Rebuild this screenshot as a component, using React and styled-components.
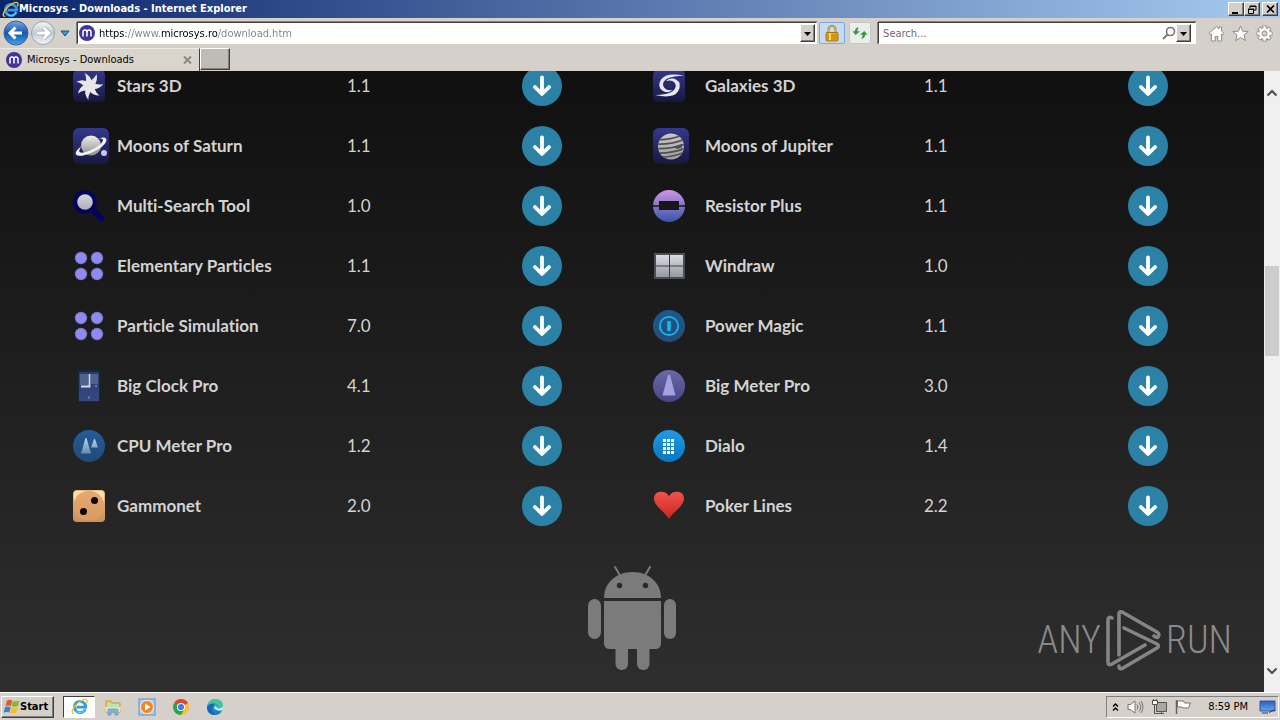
import React from "react";
import styled, { createGlobalStyle, css } from "styled-components";

const GlobalStyle = createGlobalStyle`
  * { box-sizing: border-box; }
  html, body { margin: 0; height: 100%; }
  #root { height: 100%; }
  button, input { font: inherit; padding: 0; margin: 0; border: 0; border-radius: 0; background: none; outline: none; }
  svg { display: block; flex: none; }
`;

const raised = css`
  background: #d4d0c8;
  border: 1px solid;
  border-color: #fff #404040 #404040 #fff;
  box-shadow: inset -1px -1px 0 #808080;
`;

const Screen = styled.div`
  height: 100vh;
  display: flex;
  flex-direction: column;
  overflow: hidden;
  background: #d5d0c9;
  color: #000;
  font: 11px/14px "DejaVu Sans Condensed", "DejaVu Sans", sans-serif;
`;

const TitleBar = styled.header`
  flex: none;
  height: 18px;
  padding: 0 2px;
  display: flex;
  align-items: center;
  background: linear-gradient(90deg, #0a246a, #a6caf0);
  color: #fff;
`;

const WindowTitle = styled.h1`
  flex: 1;
  margin: 0;
  font: bold 11px/18px "DejaVu Sans Condensed", "DejaVu Sans", sans-serif;
`;

const WindowButton = styled.button`
  ${raised}
  width: 16px;
  height: 14px;
  margin-left: ${(p) => (p.$spaced ? 2 : 0)}px;
  display: flex;
  align-items: center;
  justify-content: center;
`;

const Toolbar = styled.div`
  flex: none;
  height: 30px;
  padding: 0 4px 0 2px;
  display: flex;
  align-items: center;
`;

const PlainButton = styled.button`
  display: flex;
  align-items: center;
  justify-content: center;
  width: ${(p) => p.$width || 24}px;
  height: 28px;
`;

const Field = styled.div`
  flex: ${(p) => p.$grow} 1 0;
  min-width: 0;
  height: 22px;
  padding: 1px;
  display: flex;
  align-items: center;
  background: #fff;
  border: 1px solid;
  border-color: #404040 #fff #fff #404040;
  box-shadow: 0 -1px 0 #808080, -1px 0 0 #808080;
`;

const AddressInput = styled.input`
  flex: 1;
  min-width: 0;
  height: 18px;
  margin-left: 4px;
  color: transparent;
  background: linear-gradient(90deg, #000 27px, #808080 27px 62px, #000 62px 119px, #808080 119px);
  -webkit-background-clip: text;
  background-clip: text;
`;

const SearchInput = styled.input`
  flex: 1;
  min-width: 0;
  height: 18px;
  margin-left: 3px;
  &::placeholder { color: #6d6d6d; opacity: 1; }
`;

const DropButton = styled.button`
  ${raised}
  width: 15px;
  height: 18px;
  display: flex;
  align-items: center;
  justify-content: center;
`;

const StatusButton = styled.button`
  width: ${(p) => (p.$active ? 26 : 22)}px;
  height: 22px;
  margin-left: ${(p) => (p.$active ? 2 : 4)}px;
  display: flex;
  align-items: center;
  justify-content: center;
  background: ${(p) => (p.$active ? "#c5dcf7" : "#e9eeea")};
  border: 1px solid ${(p) => (p.$active ? "#7da7df" : "#c4c8cc")};
  border-radius: 2px;
`;

const FieldGap = styled.div`
  width: ${(p) => p.$width}px;
  flex: none;
`;

const TabRow = styled.nav`
  flex: none;
  height: 23px;
  display: flex;
`;

const Tab = styled.div`
  width: 200px;
  padding: 0 6px;
  display: flex;
  align-items: center;
  gap: 5px;
  background: #d9d4cc;
  border-top: 1px solid #eeebe5;
  border-right: 1px solid #404040;
`;

const TabLabel = styled.span`
  flex: 1;
`;

const CloseTab = styled.button`
  width: 12px;
  height: 12px;
  display: flex;
  align-items: center;
  justify-content: center;
`;

const NewTab = styled.button`
  ${raised}
  width: 30px;
  height: 22px;
  background: #bfbbb5;
`;

const Viewport = styled.div`
  flex: 1;
  min-height: 0;
  display: flex;
`;

const Page = styled.main`
  position: relative;
  flex: 1;
  min-width: 0;
  overflow: hidden;
  background: linear-gradient(#101010, #2e2e2e);
`;

const Lists = styled.div`
  display: flex;
  align-items: flex-start;
  gap: 91px;
  margin-top: -15px;
  padding: 0 96px 0 73px;
`;

const Programs = styled.table`
  flex: ${(p) => p.$grow} 1 0;
  min-width: 0;
  width: 0;
  table-layout: fixed;
  border-collapse: collapse;
  color: #d3d3d3;
  font: 17px/24px Lato, Carlito, sans-serif;
  font-variant-ligatures: none;
`;

const IconCol = styled.col`
  width: ${(p) => p.$width}px;
`;
const VersionCol = styled.col`
  width: ${(p) => p.$width}px;
`;
const LinkCol = styled.col`
  width: 40px;
`;

const Cell = styled.td`
  height: 60px;
  padding: 0;
  vertical-align: middle;
`;

const NameCell = styled.th`
  height: 60px;
  padding: 0;
  text-align: left;
  font-weight: 700;
  white-space: nowrap;
`;

const Download = styled.a`
  display: flex;
  align-items: center;
  justify-content: center;
  width: 40px;
  height: 40px;
  border-radius: 50%;
  background: #2c82a6;
`;

const Robot = styled.div`
  display: flex;
  justify-content: center;
  padding-top: 30px;
`;

const Watermark = styled.div`
  position: absolute;
  right: 32px;
  bottom: 20px;
  display: flex;
  align-items: center;
  gap: 5px;
  color: #8a8a8a;
  font: 300 38px/64px "Roboto Condensed", "Open Sans Condensed", "Noto Sans ExtraCondensed", "Liberation Sans Narrow", sans-serif;
`;

const Scrollbar = styled.div`
  flex: none;
  width: 16px;
  padding: 14px 0 13px;
  display: flex;
  flex-direction: column;
  background: #f0f0f0;
`;

const ScrollButton = styled.button`
  height: 16px;
  display: flex;
  align-items: center;
  justify-content: center;
`;

const Track = styled.div`
  flex: 1;
  padding: 0 1px;
  display: flex;
  flex-direction: column;
`;

const Before = styled.div`
  flex: 165;
`;
const Thumb = styled.div`
  flex: 90;
  background: #cdcdcd;
`;
const After = styled.div`
  flex: 307;
`;

const Taskbar = styled.footer`
  flex: none;
  height: 28px;
  padding: 0 1px;
  display: flex;
  align-items: center;
  border-top: 1px solid #fff;
  background: #d5d0c9;
`;

const StartButton = styled.button`
  ${raised}
  width: 53px;
  height: 22px;
  padding: 0 1px;
  display: flex;
  align-items: center;
  font: bold 11px/18px "DejaVu Sans Condensed", "DejaVu Sans", sans-serif;
`;

const Launchers = styled.div`
  flex: 1;
  display: flex;
  align-items: center;
  gap: 2px;
  margin-left: 9px;
`;

const Launcher = styled.button`
  width: 32px;
  height: 22px;
  display: flex;
  align-items: center;
  justify-content: center;
  ${(p) =>
    p.$active &&
    css`
      background: #fff;
      border: 1px solid;
      border-color: #404040 #fff #fff #404040;
    `}
`;

const Tray = styled.div`
  height: 22px;
  padding: 0 2px 0 4px;
  display: flex;
  align-items: center;
  gap: 7px;
  border: 1px solid;
  border-color: #808080 #fff #fff #808080;
`;

const Clock = styled.time`
  margin: 0 4px 0 9px;
`;

/* ---------- window icons ---------- */

const IeIcon = ({ size = 17 }) => (
  <svg width={size} height={size} viewBox="0 0 18 18">
    <path d="M15.2 11.7A6 6 0 1 1 15.6 9.600H5.800" fill="none" stroke="#2f9be0" strokeWidth="2.900" />
    <path d="M14.800 11.700A5.600 5.600 0 0 1 5 13.300" fill="none" stroke="#7fd3f7" strokeWidth="1" />
    <path d="M3.400 16.300C-.6 16.700 1.500 11 6.200 6.400 11 1.800 17.200-.4 16.900 3.500c-.1 1-.6 2-.6 2" fill="none" stroke="#f3c02e" strokeWidth="1.500" />
  </svg>
);

const SiteIcon = () => (
  <svg width="16" height="16" viewBox="0 0 16 16">
    <circle cx="8" cy="8" r="8" fill="#43349c" />
    <path d="M4 11.5V7.2Q4 5 6 5t2 2.200v4.300M8 7.200Q8 5 10 5t2 2.200v4.300" fill="none" stroke="#fff" strokeWidth="1.500" />
  </svg>
);

const Back = () => (
  <svg width="26" height="26" viewBox="0 0 26 26">
    <defs>
      <linearGradient id="back" x2="0" y2="1">
        <stop offset="0" stopColor="#7aa7e0" />
        <stop offset=".5" stopColor="#1a55ae" />
        <stop offset="1" stopColor="#3fa4ee" />
      </linearGradient>
    </defs>
    <circle cx="13" cy="13" r="12" fill="url(#back)" stroke="#3d5f92" />
    <path d="M19 13H8M12.500 7.500 7 13l5.500 5.500" fill="none" stroke="#fff" strokeWidth="3" />
  </svg>
);

const Forward = () => (
  <svg width="26" height="26" viewBox="0 0 26 26">
    <defs>
      <linearGradient id="forward" x2="0" y2="1">
        <stop offset="0" stopColor="#f5f6f8" />
        <stop offset=".5" stopColor="#c3cad3" />
        <stop offset="1" stopColor="#f3f6fa" />
      </linearGradient>
    </defs>
    <circle cx="13" cy="13" r="11.500" fill="url(#forward)" stroke="#98a2ae" />
    <path d="M7 13h11M13.500 7.500 19 13l-5.500 5.500" fill="none" stroke="#a0a8b2" strokeWidth="4.400" />
    <path d="M7 13h11M13.500 7.500 19 13l-5.500 5.500" fill="none" stroke="#fff" strokeWidth="2.800" />
  </svg>
);

const Triangle = ({ blue }) => (
  <svg width="10" height="7" viewBox="0 0 10 7">
    {blue ? <path d="M1 1h8L5 6z" fill="#35a0d5" stroke="#1b4d83" /> : <path d="M1 2h7L4.500 6z" fill="#000" />}
  </svg>
);

const Lock = () => (
  <svg width="14" height="17" viewBox="0 0 14 17">
    <path d="M3.500 8V4.500a3.500 3.500 0 0 1 7 0V8" fill="none" stroke="#a87b1e" strokeWidth="2" />
    <path d="M3.500 8V4.500a3.500 3.500 0 0 1 7 0V8" fill="none" stroke="#e4c063" strokeWidth=".8" />
    <rect x="1" y="7.500" width="12" height="8.500" rx="1" fill="#e8a81c" stroke="#a7730f" />
    <path d="M2 10h10M2 12h10M2 14h10" stroke="#bd8210" />
    <path d="M5 8v7" stroke="#fad879" strokeWidth="2" />
  </svg>
);

const Refresh = () => (
  <svg width="16" height="14" viewBox="0 0 16 14">
    <path d="M6.500 1 5.200 5.200H8L3.700 9 .5 5.200h2.300Q3.200 2 6.500 1z" fill="#2e9a3b" />
    <path d="m9.500 13 1.300-4.200H8L12.300 5l3.200 3.800h-2.300Q12.800 12 9.500 13z" fill="#2e9a3b" />
  </svg>
);

const Magnifier = () => (
  <svg width="14" height="14" viewBox="0 0 14 14">
    <circle cx="8.500" cy="5.500" r="4" fill="none" stroke="#777" strokeWidth="1.600" />
    <path d="m5.500 8.500-4.500 4.500" stroke="#777" strokeWidth="2" />
  </svg>
);

const Home = () => (
  <svg width="17" height="17" viewBox="0 0 17 17">
    <path d="M1 8.300 8.500 1.500 11 3.800V2h2.500v4L16 8.300l-1.200 1.500-1.100-1V16h-3.900v-4.500H7.200V16H3.300V8.800l-1.100 1z" fill="#fff" stroke="#8c8a86" />
  </svg>
);
const Star = () => (
  <svg width="17" height="17" viewBox="0 0 17 17">
    <path d="m8.500 1 2.100 5.200 5.600.3-4.300 3.600 1.400 5.500-4.800-3.100-4.800 3.100 1.400-5.500L.8 6.500l5.600-.3z" fill="#fff" stroke="#8c8a86" />
  </svg>
);
const Gear = () => (
  <svg width="17" height="17" viewBox="0 0 17 17">
    <g stroke="#8c8a86" strokeWidth="4.200">
      <path d="M8.500.5v16M.5 8.500h16M2.800 2.800l11.400 11.400M14.200 2.800 2.800 14.200" />
    </g>
    <circle cx="8.500" cy="8.500" r="6.300" fill="#8c8a86" />
    <g stroke="#fff" strokeWidth="2.400">
      <path d="M8.500 1.200v14.600M1.200 8.500h14.600M3.300 3.300l10.400 10.400M13.700 3.300 3.300 13.700" />
    </g>
    <circle cx="8.500" cy="8.500" r="5.400" fill="#fff" />
    <circle cx="8.500" cy="8.500" r="2.500" fill="#d5d0c9" stroke="#8c8a86" />
  </svg>
);

/* ---------- program icons ---------- */

const Gradient = ({ id, from, to }) => (
  <defs>
    <linearGradient id={id} x2="0" y2="1">
      <stop offset="0" stopColor={from} />
      <stop offset="1" stopColor={to} />
    </linearGradient>
  </defs>
);

const Art = ({ size = 32, children }) => (
  <svg width={size} height={size} viewBox={`0 0 ${size} ${size}`}>
    {children}
  </svg>
);

const Stars = () => (
  <Art>
    <Gradient id="stars" from="#33388c" to="#15173f" />
    <rect width="32" height="32" rx="5" fill="url(#stars)" />
    <g fill="#e8e6e6" transform="translate(16.500 16)">
      <circle r="5" />
      {[0, 51.400, 102.900, 154.300, 205.700, 257.100, 308.600].map((a) => (
        <path key={a} transform={`rotate(${a})`} d="M-4.200-2.500Q-2.200-8-5-13 1.500-10 2.200-4z" />
      ))}
    </g>
  </Art>
);

const Galaxy = () => (
  <Art>
    <Gradient id="galaxy" from="#33388c" to="#15173f" />
    <rect width="32" height="32" rx="5" fill="url(#galaxy)" />
    <g fill="#e8e6ec">
      <path d="M31 5.500Q13 2 8 9.500 3.500 17 10 21q6 3 10-1-6 1-8.500-2Q8 13.500 13 9.500 19 6 31 5.500z" />
      <path d="M2 25Q20 29 25 21.500 29.500 13 23 9.500q-6-3-10 1.500 6-1.500 8.500 1.500 3 4-1.500 8.500Q14 25 2 25z" />
    </g>
    <path d="M28 7.500Q14 6.500 11 12M5 23.500Q18 24 21.500 18.500" fill="none" stroke="#2b2f70" strokeWidth=".8" />
    <circle cx="16.500" cy="15.300" r="2.800" fill="#292d6c" />
  </Art>
);

const Saturn = () => (
  <Art size={36}>
    <Gradient id="saturn" from="#34398e" to="#16183f" />
    <Gradient id="saturnBall" from="#f0eee8" to="#8f8e90" />
    <rect width="36" height="36" rx="6" fill="url(#saturn)" />
    <circle cx="18" cy="17.500" r="10" fill="url(#saturnBall)" />
    <path d="M8.500 18Q1 24 3 26.500 6 30 19 24.500 33 18 33.500 12 33 8 26 10.500 31.500 10 29.500 13.500 27 18 18 22 9 26 6.500 24 5.500 22.500 8.500 18z" fill="#f1f0f2" />
    <circle cx="31" cy="25" r="3" fill="#c3c6f3" />
  </Art>
);

const Jupiter = () => (
  <Art size={36}>
    <Gradient id="jupiter" from="#34398e" to="#16183f" />
    <Gradient id="jupiterBall" from="#c9c8c6" to="#a2a0a2" />
    <clipPath id="jupiterClip"><circle cx="18" cy="18.500" r="13" /></clipPath>
    <rect width="36" height="36" rx="6" fill="url(#jupiter)" />
    <circle cx="18" cy="18.500" r="13" fill="url(#jupiterBall)" />
    <g clipPath="url(#jupiterClip)" fill="none" stroke="#515054" strokeWidth="1.700">
      <path d="M5 11.500q9 1 24-4M3 16q13 1 28-4.500M3 20.500q14 1 30-4.500M3 25q14 1 30-5M6 29q12 1 26-5" />
      <path d="m22 19 6-2v2l-4 1z" fill="#515054" />
    </g>
  </Art>
);

const SearchTool = () => (
  <Art>
    <Gradient id="lens" from="#d9d9e6" to="#aaaab6" />
    <path d="m19 19 9.500 9.500" stroke="#03035c" strokeWidth="6" strokeLinecap="round" />
    <circle cx="12" cy="12" r="9.800" fill="url(#lens)" stroke="#03035c" strokeWidth="4" />
  </Art>
);

const Resistor = () => (
  <Art>
    <Gradient id="resistor" from="#d193e6" to="#3556a5" />
    <circle cx="16" cy="16" r="16" fill="url(#resistor)" />
    <path d="M0 15.200h6V11h20v4.200h6v1.600h-6V20H6v-3.200H0z" fill="#171717" />
  </Art>
);

const Particles = () => (
  <Art>
    <defs>
      <radialGradient id="particle">
        <stop offset="0" stopColor="#8c88fb" />
        <stop offset=".7" stopColor="#918cf2" />
        <stop offset="1" stopColor="#706ab8" />
      </radialGradient>
    </defs>
    {[8, 24].map((y) => [8, 24].map((x) => <circle key={`${x}-${y}`} cx={x} cy={y} r="6.200" fill="url(#particle)" />))}
  </Art>
);

const Windraw = () => (
  <Art>
    <Gradient id="pane" from="#dadce3" to="#9699a2" />
    <path d="M1 3h31v26H1z" fill="#4b4e57" />
    <path d="M3 5h27v22H3z" fill="url(#pane)" />
    <path d="M16.500 5v22M3 16h27" stroke="#383a42" />
  </Art>
);

const Power = () => (
  <Art>
    <Gradient id="power" from="#195b8d" to="#264b77" />
    <circle cx="16" cy="16" r="16" fill="url(#power)" />
    <circle cx="16" cy="16" r="9.200" fill="none" stroke="#12bdf0" strokeWidth="1.700" />
    <path d="M16 11v10" stroke="#12bdf0" strokeWidth="3.400" />
  </Art>
);

const BigClock = () => (
  <Art>
    <Gradient id="clock" from="#2b3a69" to="#354987" />
    <rect x="5" y="0" width="22" height="32" rx="2" fill="#16283d" />
    <rect x="6" y="2" width="20" height="29" fill="url(#clock)" />
    <path d="M7 4h8v11H7zM18 4h7v10h-7z" fill="#4d628f" />
    <path d="M8 16.500h8.500V4" fill="none" stroke="#d8dde5" strokeWidth="1.800" />
    <path d="M22 16h2M16 26.500v2" stroke="#8291c3" strokeWidth="1.500" />
  </Art>
);

const BigMeter = () => (
  <Art>
    <Gradient id="meter" from="#6b68a9" to="#484585" />
    <circle cx="16" cy="16" r="16" fill="url(#meter)" />
    <path d="M15 5h2L22.500 25.500h-13z" fill="#a5a0df" />
  </Art>
);

const CpuMeter = () => (
  <Art>
    <Gradient id="cpu" from="#235d98" to="#204a76" />
    <Gradient id="cpuCone" from="#bfd2e5" to="#638caf" />
    <circle cx="16" cy="16" r="16" fill="url(#cpu)" />
    <path d="M12.500 8h1L18 23.500H8zM21 9h1l3 8.500h-7z" fill="url(#cpuCone)" />
  </Art>
);

const Dialo = () => (
  <Art>
    <Gradient id="dialo" from="#209be7" to="#0876bd" />
    <circle cx="16" cy="16" r="16" fill="url(#dialo)" />
    {[9, 13, 17, 21].map((y) => [10, 14, 18].map((x) => <rect key={`${x}-${y}`} x={x} y={y} width="3" height="3" fill="#fff" />))}
  </Art>
);

const Die = () => (
  <Art>
    <Gradient id="die" from="#edba7e" to="#d08d5a" />
    <rect width="32" height="32" rx="4" fill="url(#die)" />
    <path d="M1 6V4q0-3 3-3h9Q4 3 1 11zM19 1h9q3 0 3 3v8Q28 4 19 1z" fill="#fbdfac" />
    <circle cx="16" cy="16" r="15" fill="#df9f69" opacity=".65" />
    <circle cx="21.500" cy="10.500" r="3.500" fill="#080605" />
    <circle cx="10.500" cy="21.500" r="3.500" fill="#080605" />
  </Art>
);

const Heart = () => (
  <Art>
    <Gradient id="heart" from="#ef5349" to="#cd2524" />
    <path d="M16 29Q14 25.500 6.500 18.500 1 13 1 8.500C1 4.500 4 1.800 8 1.800q5.500 0 8 4.400 2.500-4.400 8-4.400c4 0 7 2.700 7 6.700q0 4.500-5.500 10Q18 25.500 16 29z" fill="url(#heart)" />
  </Art>
);

const DownArrow = () => (
  <svg width="20" height="22" viewBox="0 0 20 22">
    <path d="M10 2.500v16M2.900 12l7.100 7 7.100-7" fill="none" stroke="#fff" strokeWidth="3.800" strokeLinecap="round" strokeLinejoin="round" />
  </svg>
);

const RobotArt = () => (
  <svg width="88" height="104" viewBox="0 0 88 104" fill="#7b7b7b">
    <path d="m27 1 6 10M62 1l-6 10" stroke="#7b7b7b" strokeWidth="2" strokeLinecap="round" />
    <path d="M16 32C16 17 28 6 44.500 6S73 17 73 32z" />
    <circle cx="31.500" cy="19.500" r="2.700" fill="#292929" />
    <circle cx="57.500" cy="19.500" r="2.700" fill="#292929" />
    <path d="M16 35h57v42q0 6-6 6H22q-6 0-6-6z" />
    <rect x="0" y="33" width="13" height="40" rx="6.500" />
    <rect x="76" y="33" width="12" height="40" rx="6" />
    <rect x="27.500" y="74" width="12.500" height="30" rx="6" />
    <rect x="49" y="74" width="12.500" height="30" rx="6" />
  </svg>
);

const PlayMark = () => (
  <svg width="55" height="63" viewBox="0 0 55 63" fill="none" stroke="#858585" strokeWidth="3.600" strokeLinejoin="round" strokeLinecap="round">
    <path d="M13 46V5q0-3 3-2l35 20q3 2 1 5-1 1-4-1" />
    <path d="M6 9Q2 7 2 11v42q0 4 4 2l33-19" />
    <path d="m18 19 33 16q3 2 0 4L17 59q-4 2-4-2" />
  </svg>
);

/* ---------- taskbar icons ---------- */

const WindowsFlag = () => (
  <svg width="17" height="16" viewBox="0 0 17 16">
    <path d="M4 1.500Q7 0 9.300 1.500L8 7Q5 5.800 2.300 7z" fill="#e65a2a" />
    <path d="M10 2Q13 3 16.300 1.500L15 7q-3 1.500-6.200.3z" fill="#7dba36" />
    <path d="M2 8.200q3-1.300 5.600 0L6.300 13.500Q4 12.300.7 13.500z" fill="#3b7fd0" />
    <path d="M8.500 8.500q3 1.200 6.200-.2l-1.300 5.200q-3 1.500-6.200.3z" fill="#f5bd24" />
  </svg>
);
const Folder = () => (
  <svg width="18" height="18" viewBox="0 0 18 18">
    <path d="M2 3h5l1 2h8v9H2z" fill="#eecf69" stroke="#c49d3a" />
    <path d="M3 6h12v3H3z" fill="#b9e3bb" />
    <path d="M1 9h16l-1 5H2z" fill="#f7e49c" />
    <path d="M4 17v-5q0-1 1-1h8q1 0 1 1v5h-3v-3H7v3z" fill="#7db8e6" stroke="#4c91c7" strokeWidth=".7" />
  </svg>
);
const Player = () => (
  <svg width="18" height="18" viewBox="0 0 18 18">
    <rect x="1" y="1" width="16" height="16" fill="#acd0ef" stroke="#5d91c7" />
    <circle cx="9" cy="9" r="6.500" fill="#f38620" stroke="#fff" strokeWidth=".8" />
    <path d="m7 5.500 5.500 3.500L7 12.500z" fill="#fff" />
  </svg>
);
const Chrome = () => (
  <svg width="18" height="18" viewBox="0 0 18 18">
    <circle cx="9" cy="9" r="8" fill="#f6c32a" />
    <path d="M9 9 2.100 5A8 8 0 0 1 16 5z" fill="#dc4437" />
    <path d="M9 9 2.100 5A8 8 0 0 0 9 17l3.500-6z" fill="#28a254" />
    <circle cx="9" cy="9" r="4" fill="#fff" />
    <circle cx="9" cy="9" r="3.100" fill="#3f7fe8" />
  </svg>
);
const Edge = () => (
  <svg width="18" height="18" viewBox="0 0 18 18">
    <Gradient id="edge" from="#45c7b8" to="#1270c5" />
    <circle cx="9" cy="9" r="8" fill="url(#edge)" />
    <path d="M1 9q3-5 8-3Q4 10 8 15.500L9 17Q1 17 1 9z" fill="#1667ba" />
    <path d="M9 8q-1.500 2 .5 3.500 3.500 2 7 .5l1-4-3 1.500Q12 11 10.500 9 10 8.500 9 8z" fill="#d5e9e8" />
    <path d="M9 1q8 0 8 7-1 3-5 2.500Q14 6 9 5 5 4.500 2 6.500 4 1 9 1z" fill="#42c49d" />
  </svg>
);
const Speaker = () => (
  <svg width="17" height="16" viewBox="0 0 17 16" fill="none" stroke="#77736e">
    <path d="M1 5.500h2.500L8 2v12l-4.500-3.500H1z" fill="#fff" />
    <path d="M10 5.500q2 2.500 0 5M12 3.500q3.500 4.500 0 9M14 2q4 6 0 12" />
  </svg>
);
const Network = () => (
  <svg width="17" height="16" viewBox="0 0 17 16">
    <path d="M5.500 3.500h10v9h-10z" fill="#a9a8a5" stroke="#55534f" />
    <path d="M1.500 1.500h5v4h-5z" fill="#fff" stroke="#55534f" />
    <path d="M3.500 6v8.500H13M10.500 12v2" fill="none" stroke="#55534f" />
    <path d="M2.500 0v2M5.500 0v2" stroke="#55534f" />
  </svg>
);
const Flag = () => (
  <svg width="17" height="16" viewBox="0 0 17 16">
    <path d="M2.500 2h6l1 2h6l-2 5H8L7 8H2.500z" fill="#fff" stroke="#77736e" />
    <path d="M1.500 1v14" stroke="#66635f" strokeWidth="1.500" />
  </svg>
);
const Desktop = () => (
  <svg width="17" height="14" viewBox="0 0 17 14">
    <Gradient id="desktop" from="#2762be" to="#6aa3e8" />
    <path d="M1 1h15v10H1z" fill="url(#desktop)" stroke="#295ba6" />
    <path d="M3 13h6M10 12.500l6-3" stroke="#183d72" />
  </svg>
);

const left = [
  ["Stars 3D", "1.1", Stars],
  ["Moons of Saturn", "1.1", Saturn],
  ["Multi-Search Tool", "1.0", SearchTool],
  ["Elementary Particles", "1.1", Particles],
  ["Particle Simulation", "7.0", Particles],
  ["Big Clock Pro", "4.1", BigClock],
  ["CPU Meter Pro", "1.2", CpuMeter],
  ["Gammonet", "2.0", Die],
];
const right = [
  ["Galaxies 3D", "1.1", Galaxy],
  ["Moons of Jupiter", "1.1", Jupiter],
  ["Resistor Plus", "1.1", Resistor],
  ["Windraw", "1.0", Windraw],
  ["Power Magic", "1.1", Power],
  ["Big Meter Pro", "3.0", BigMeter],
  ["Dialo", "1.4", Dialo],
  ["Poker Lines", "2.2", Heart],
];

const ProgramTable = ({ items, grow, iconWidth, versionWidth }) => (
  <Programs $grow={grow}>
    <colgroup>
      <IconCol $width={iconWidth} />
      <col />
      <VersionCol $width={versionWidth} />
      <LinkCol />
    </colgroup>
    <tbody>
      {items.map(([name, version, Icon]) => (
        <tr key={name}>
          <Cell><Icon /></Cell>
          <NameCell scope="row">{name}</NameCell>
          <Cell>{version}</Cell>
          <Cell><Download href="#" aria-label={`Download ${name}`}><DownArrow /></Download></Cell>
        </tr>
      ))}
    </tbody>
  </Programs>
);

export default function App() {
  return (
    <Screen>
      <GlobalStyle />
      <TitleBar>
        <IeIcon />
        <WindowTitle>Microsys - Downloads - Internet Explorer</WindowTitle>
        <WindowButton aria-label="Minimize">
          <svg width="10" height="9"><path d="M1 7h6v2H1z" /></svg>
        </WindowButton>
        <WindowButton aria-label="Restore">
          <svg width="10" height="9"><path d="M3 3V1h6v4H7M3 1.500h6M1.500 4.500h5v4h-5zM1 4h6" fill="none" stroke="#000" /></svg>
        </WindowButton>
        <WindowButton aria-label="Close" $spaced>
          <svg width="9" height="8"><path d="m1 .5 7 7m0-7-7 7" stroke="#000" strokeWidth="1.600" /></svg>
        </WindowButton>
      </TitleBar>

      <Toolbar>
        <PlainButton $width={27} aria-label="Back"><Back /></PlainButton>
        <PlainButton $width={28} aria-label="Forward"><Forward /></PlainButton>
        <PlainButton $width={16} aria-label="Recent pages"><Triangle blue /></PlainButton>
        <FieldGap $width={4} />
        <Field $grow={741}>
          <SiteIcon />
          <AddressInput aria-label="Address" defaultValue="https://www.microsys.ro/download.htm" />
          <DropButton aria-label="Show address list"><Triangle /></DropButton>
        </Field>
        <StatusButton $active aria-label="Security report"><Lock /></StatusButton>
        <StatusButton aria-label="Refresh"><Refresh /></StatusButton>
        <FieldGap $width={7} />
        <Field $grow={316}>
          <SearchInput aria-label="Search" placeholder="Search..." />
          <Magnifier />
          <DropButton aria-label="Search options"><Triangle /></DropButton>
          <FieldGap $width={3} />
        </Field>
        <FieldGap $width={8} />
        <PlainButton aria-label="Home"><Home /></PlainButton>
        <PlainButton aria-label="Favorites"><Star /></PlainButton>
        <PlainButton aria-label="Tools"><Gear /></PlainButton>
      </Toolbar>

      <TabRow>
        <Tab>
          <SiteIcon />
          <TabLabel>Microsys - Downloads</TabLabel>
          <CloseTab aria-label="Close tab">
            <svg width="9" height="8"><path d="m1 .5 7 7m0-7-7 7" stroke="#8b8883" strokeWidth="2" /></svg>
          </CloseTab>
        </Tab>
        <NewTab aria-label="New tab" />
      </TabRow>

      <Viewport>
        <Page>
          <Lists>
            <ProgramTable items={left} grow={489} iconWidth={44} versionWidth={175} />
            <ProgramTable items={right} grow={515} iconWidth={52} versionWidth={204} />
          </Lists>
          <Robot><RobotArt /></Robot>
          <Watermark><span>ANY</span><PlayMark /><span>RUN</span></Watermark>
        </Page>
        <Scrollbar>
          <ScrollButton aria-label="Scroll up">
            <svg width="12" height="8"><path d="m1.500 6.500 4.500-4.500 4.500 4.500" fill="none" stroke="#505050" strokeWidth="2.200" /></svg>
          </ScrollButton>
          <Track><Before /><Thumb /><After /></Track>
          <ScrollButton aria-label="Scroll down">
            <svg width="12" height="8"><path d="m1.500 1.500 4.500 4.500 4.500-4.500" fill="none" stroke="#505050" strokeWidth="2.200" /></svg>
          </ScrollButton>
        </Scrollbar>
      </Viewport>

      <Taskbar>
        <StartButton><WindowsFlag />Start</StartButton>
        <Launchers>
          <Launcher $active aria-label="Internet Explorer"><IeIcon /></Launcher>
          <Launcher aria-label="Explorer"><Folder /></Launcher>
          <Launcher aria-label="Media Player"><Player /></Launcher>
          <Launcher aria-label="Chrome"><Chrome /></Launcher>
          <Launcher aria-label="Edge"><Edge /></Launcher>
        </Launchers>
        <Tray>
          <svg width="9" height="10"><path d="m2 4.500 2.500-2.500 2.500 2.500m-5 4 2.500-2.500 2.500 2.500" fill="none" stroke="#000" strokeWidth="1.400" /></svg>
          <Speaker />
          <Network />
          <Flag />
          <Clock>8:59 PM</Clock>
          <Desktop />
        </Tray>
      </Taskbar>
    </Screen>
  );
}
